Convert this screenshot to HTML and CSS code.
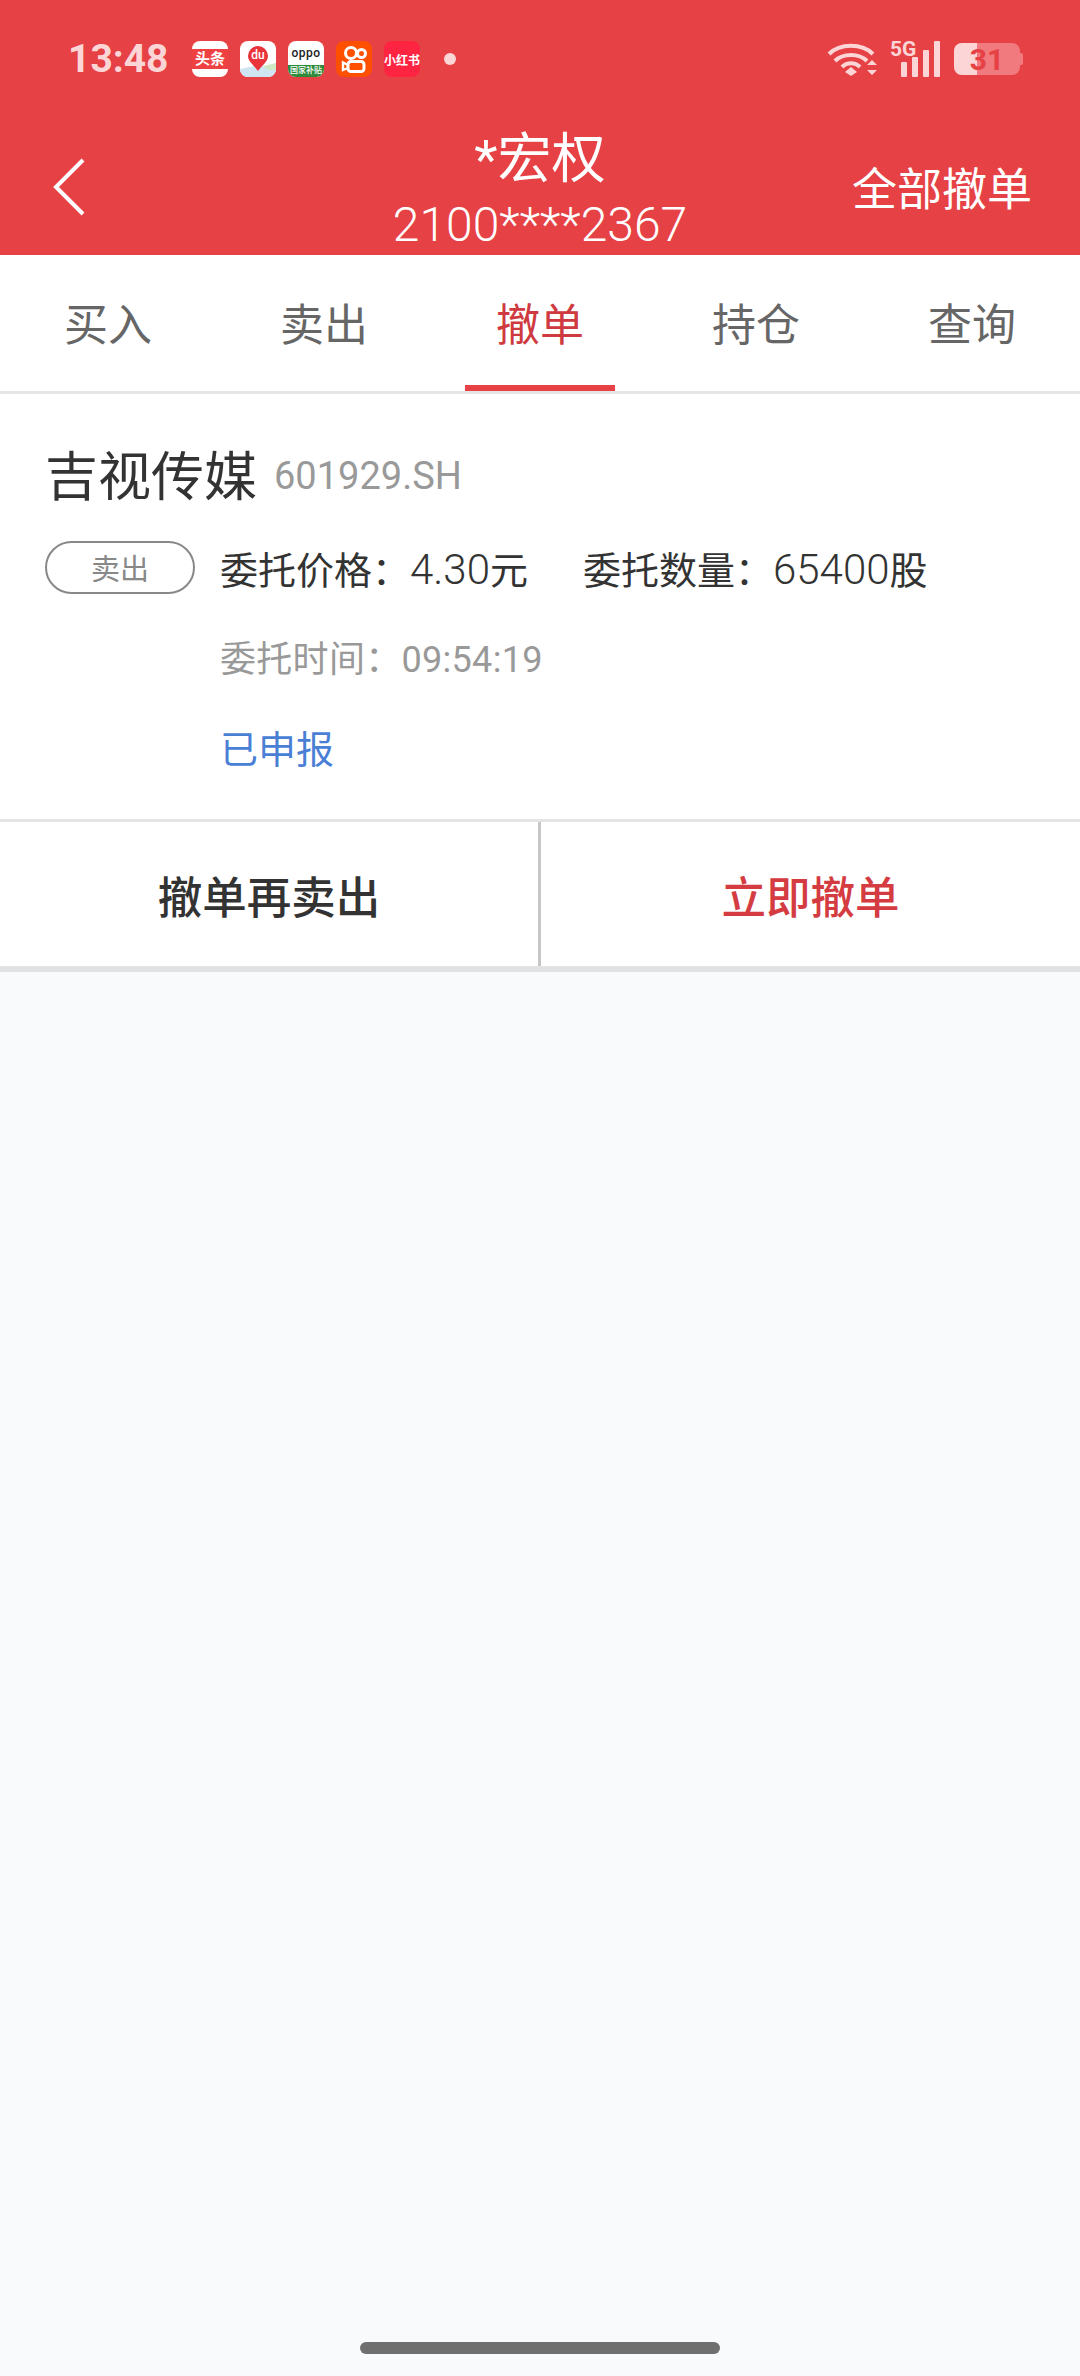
FILE: index.html
```html
<!DOCTYPE html>
<html lang="zh-CN">
<head>
<meta charset="UTF-8" />
<meta name="viewport" content="width=device-width, initial-scale=1" />
<title>撤单</title>
<link rel="stylesheet" href="styles.css">
</head>
<body>
  <div class="page">
    <header class="top">
      <div class="statusbar">
        <span class="clock">13:48</span>
        <div class="apps">
          <span class="app app-toutiao"><i>头条</i></span>
          <span class="app app-map">
            <svg viewBox="0 0 36 36" width="36" height="36">
              <path d="M0 28 L14 25 L22 25 L36 27 V36 H0 Z" fill="#cfe6f2"/>
              <path d="M23 25 L36 22 V29 L28 29 Z" fill="#cfe8c4"/>
              <path d="M18 30 C15 25 8 21 8 15 A10 10 0 0 1 28 15 C28 21 21 25 18 30 Z" fill="#e9343c"/>
              <text x="18" y="18" class="map-text" text-anchor="middle">du</text>
            </svg>
          </span>
          <span class="app app-oppo"><b>oppo</b><i>国家补贴</i></span>
          <span class="app app-kuai">
            <svg viewBox="0 0 36 36" width="36" height="36" fill="none" stroke="#fff" stroke-width="3">
              <circle cx="15" cy="12" r="5.5"/>
              <circle cx="25.5" cy="12.5" r="4"/>
              <rect x="12" y="20.5" width="16" height="10" rx="3"/>
              <path d="M12 24 L7 21.5 V29 L12 27" stroke-width="2.4"/>
            </svg>
          </span>
          <span class="app app-xhs"><i>小红书</i></span>
          <span class="dot"></span>
        </div>
        <div class="sys">
          <svg class="wifi" viewBox="0 0 52 36" width="52" height="36" fill="none" stroke="#fcd5d6" stroke-width="4">
            <path d="M3 13 C14 2 36 2 47 13"/>
            <path d="M9 20 C17 12 33 12 41 20"/>
            <path d="M16 26 C21 21 29 21 34 26"/>
            <path d="M19 31 L25 26 L31 31 L25 35 Z" fill="#fcd5d6" stroke="none"/>
            <path d="M41 24 L46 19 L51 24 Z M41 29 H51 L46 34 Z" fill="#fcd5d6" stroke="none"/>
          </svg>
          <div class="signal">
            <span class="net">5G</span>
            <svg viewBox="0 0 40 36" width="40" height="36" fill="#fcd5d6">
              <rect x="0" y="21" width="6" height="15" rx="1"/>
              <rect x="11" y="16" width="6" height="20" rx="1"/>
              <rect x="22" y="9" width="6" height="27" rx="1"/>
              <rect x="33" y="0" width="6" height="36" rx="1"/>
            </svg>
          </div>
          <div class="battery">
            <span class="battery-fill"></span>
            <span class="battery-num">31</span>
          </div>
        </div>
      </div>
      <div class="navbar">
        <svg class="back" viewBox="0 0 36 60" width="36" height="60" fill="none" stroke="#fff" stroke-width="4">
          <path d="M33 3 L6 30 L33 57"/>
        </svg>
        <div class="title">
          <div class="title-name">*宏权</div>
          <div class="title-acc">2100****2367</div>
        </div>
        <div class="cancel-all">全部撤单</div>
      </div>
    </header>

    <nav class="tabs">
      <div class="tab">买入</div>
      <div class="tab">卖出</div>
      <div class="tab active">撤单</div>
      <div class="tab">持仓</div>
      <div class="tab">查询</div>
    </nav>

    <section class="order">
      <div class="order-head">
        <span class="stock-name">吉视传媒</span>
        <span class="stock-code">601929.SH</span>
      </div>
      <div class="order-row">
        <span class="tag">卖出</span>
        <span class="price">委托价格：<span class="num">4.30</span>元</span>
        <span>委托数量：<span class="num">65400</span>股</span>
      </div>
      <div class="order-time">委托时间：09:54:19</div>
      <div class="order-state">已申报</div>
    </section>

    <div class="actions">
      <div class="action">撤单再卖出</div>
      <div class="action action-red">立即撤单</div>
    </div>

    <div class="rest"></div>
    <div class="homebar"></div>
  </div>
</body>
</html>
```

FILE: styles.css
```css
* {
  box-sizing: border-box;
}
body {
  margin: 0;
  font-family: Roboto, "Noto Sans CJK SC", sans-serif;
  font-weight: 400;
  background: #f9fafc;
}
.page {
  width: 1080px;
  height: 2376px;
  display: flex;
  flex-direction: column;
}
.top {
  background: #e64145;
  height: 255px;
  color: #fff;
}
.statusbar {
  height: 118px;
  padding: 0 0 0 68px;
  display: flex;
  align-items: center;
}
.clock {
  font-size: 39px;
  font-weight: 700;
  color: #fcd5d6;
  width: 124px;
}
.apps {
  display: flex;
  align-items: center;
  gap: 12px;
}
.app {
  width: 36px;
  height: 36px;
  border-radius: 8px;
  overflow: hidden;
  display: flex;
  flex-direction: column;
  align-items: center;
  justify-content: center;
  background: #fff;
}
.app i {
  font-style: normal;
  font-weight: 700;
}
.app-toutiao i {
  width: 100%;
  height: 20px;
  line-height: 20px;
  background: #f04142;
  color: #fff;
  font-size: 15px;
  text-align: center;
}
.map-text {
  font: 500 12px Roboto, sans-serif;
  fill: #fff;
}
.app-oppo b {
  flex: 1;
  font: 500 12px/24px Roboto, sans-serif;
  letter-spacing: 0.5px;
  color: #222;
}
.app-oppo i {
  width: 100%;
  height: 12px;
  line-height: 12px;
  background: #2e8b3c;
  color: #fff;
  font-size: 8px;
  font-weight: 500;
  text-align: center;
}
.app-kuai {
  background: #ff5000;
}
.app-xhs {
  background: #ff2442;
}
.app-xhs i {
  color: #fff;
  font-size: 12px;
  white-space: nowrap;
}
.dot {
  width: 12px;
  height: 12px;
  border-radius: 50%;
  background: #fcd5d6;
  margin-left: 12px;
}
.sys {
  margin-left: auto;
  margin-right: 60px;
  display: flex;
  align-items: center;
  gap: 14px;
}
.signal {
  position: relative;
  width: 48px;
  height: 36px;
  padding-left: 9px;
}
.net {
  position: absolute;
  left: -2px;
  top: -4px;
  font-size: 21px;
  font-weight: 700;
  color: #fcd5d6;
}
.battery {
  position: relative;
  width: 66px;
  height: 32px;
  border-radius: 8px;
  background: #f07a7d;
  display: flex;
  align-items: center;
  justify-content: center;
}
.battery::after {
  content: "";
  position: absolute;
  right: -3px;
  top: 10px;
  width: 3px;
  height: 12px;
  border-radius: 0 2px 2px 0;
  background: #f07a7d;
}
.battery-fill {
  position: absolute;
  left: 0;
  top: 0;
  bottom: 0;
  width: 23px;
  border-radius: 8px 0 0 8px;
  background: #fcd5d6;
}
.battery-num {
  position: relative;
  font-size: 30px;
  font-weight: 700;
  color: #e64145;
}
.navbar {
  height: 137px;
  display: flex;
  align-items: center;
  justify-content: space-between;
  position: relative;
  padding: 0 48px 0 50px;
}
.title {
  position: absolute;
  left: 0;
  right: 0;
  top: 0;
  text-align: center;
}
.title-name {
  font-size: 54px;
  line-height: 58px;
  margin-top: 13px;
}
.title-acc {
  font-size: 48px;
  font-weight: 300;
  line-height: 54px;
  margin-top: 9px;
}
.cancel-all {
  font-size: 45px;
  position: relative;
}
.tabs {
  height: 139px;
  background: #fff;
  border-bottom: 3px solid #e6e6e6;
  display: grid;
  grid-template-columns: repeat(5, 216px);
}
.tab {
  font-size: 44px;
  color: #666;
  display: flex;
  align-items: center;
  justify-content: center;
  position: relative;
  padding-bottom: 3px;
}
.tab.active {
  color: #cf3a40;
}
.tab.active::after {
  content: "";
  position: absolute;
  left: 33px;
  right: 33px;
  bottom: 0;
  height: 6px;
  background: #e64145;
}
.order {
  background: #fff;
  height: 425px;
  padding: 0 45px;
}
.order-head {
  display: flex;
  align-items: baseline;
  padding-top: 52px;
  height: 114px;
}
.stock-name {
  font-size: 53px;
  color: #333;
  line-height: 64px;
}
.stock-code {
  font-size: 38px;
  color: #999;
  margin-left: 17px;
  position: relative;
  top: -7px;
}
.order-row {
  display: flex;
  align-items: center;
  font-size: 38px;
  color: #333;
  margin-top: 32px;
  height: 54px;
}
.num {
  font-size: 42px;
  font-weight: 300;
  line-height: 1;
}
.tag {
  width: 150px;
  height: 53px;
  border: 2px solid #888;
  border-radius: 27px;
  color: #888;
  font-size: 29px;
  display: flex;
  align-items: center;
  justify-content: center;
  margin-right: 25px;
}
.price {
  width: 363px;
}
.order-time {
  font-size: 36px;
  letter-spacing: 0.3px;
  color: #999;
  margin: 39px 0 0 175px;
  line-height: 54px;
}
.order-state {
  font-size: 38px;
  color: #4a7fd6;
  margin: 36px 0 0 175px;
  line-height: 54px;
}
.actions {
  height: 153px;
  background: #fff;
  border-top: 3px solid #e4e4e4;
  border-bottom: 6px solid #e2e2e2;
  display: grid;
  grid-template-columns: 541px 539px;
}
.action {
  font-size: 44.5px;
  font-weight: 500;
  color: #333;
  display: flex;
  align-items: center;
  justify-content: center;
}
.action:first-child {
  border-right: 3px solid #c6c6c6;
}
.action-red {
  color: #d43c42;
}
.rest {
  flex: 1;
}
.homebar {
  width: 360px;
  height: 12px;
  border-radius: 6px;
  background: #6f6f6f;
  margin: 0 auto 22px;
}
```
